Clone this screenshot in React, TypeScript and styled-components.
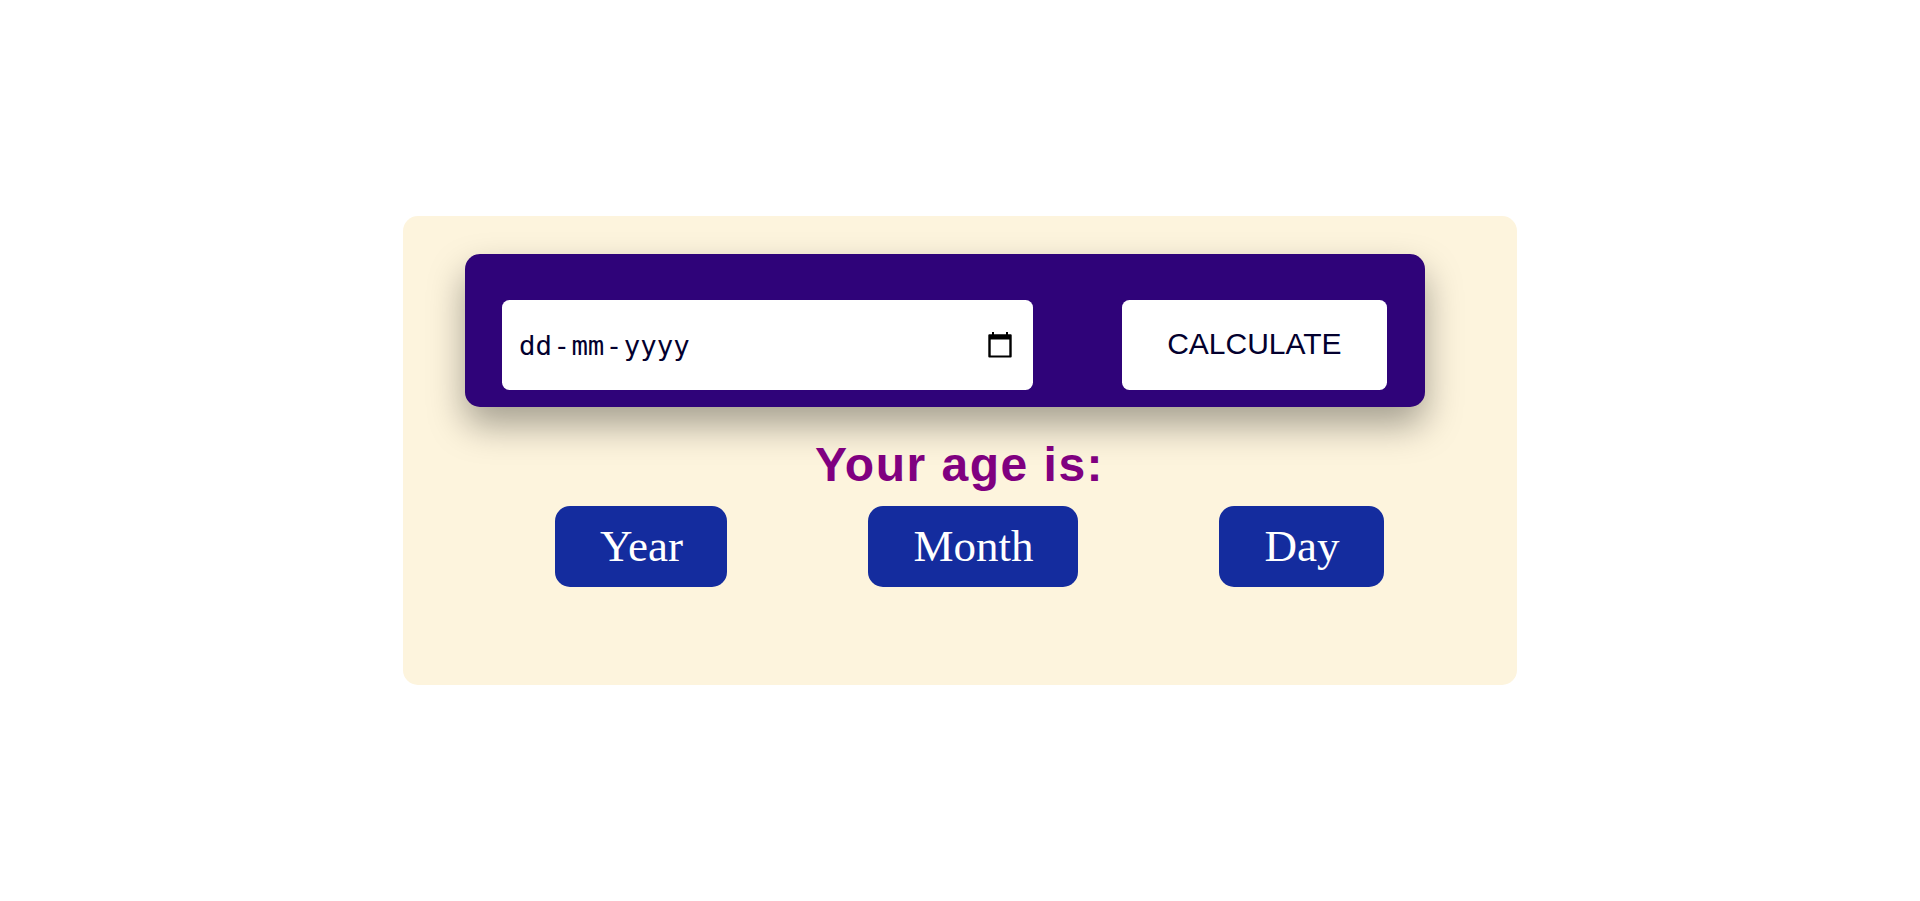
import React from "react";
import styled, { createGlobalStyle } from "styled-components";

const GlobalStyle = createGlobalStyle`
  *, *::before, *::after { box-sizing: border-box; }
  body { margin: 0; background: #ffffff; }
`;

const Page = styled.main`
  min-height: 100vh;
  display: flex;
  align-items: center;
  justify-content: center;
`;

const Card = styled.section`
  width: 1114px;
  height: 468.5px;
  padding-top: 38px;
  border-radius: 15px;
  background: #fdf4dd;
`;

const Panel = styled.form`
  display: flex;
  justify-content: space-between;
  width: 960px;
  height: 153px;
  margin: 0 0 0 62.4px;
  padding: 46px 38px 17px 37px;
  border-radius: 15px;
  background: #2f0379;
  box-shadow: 0 18px 36px rgba(0, 0, 0, 0.35);
`;

const DateField = styled.div`
  display: flex;
  align-items: center;
  justify-content: space-between;
  width: 531px;
  height: 90px;
  padding: 0 21px 0 16.5px;
  border-radius: 7.5px;
  background: #ffffff;
  color: #03002e;
  font: 27.4px/34px "DejaVu Sans Mono", monospace;
`;

const DateText = styled.span`
  display: flex;
  padding-top: 2px;
`;

const Separator = styled.span`
  padding: 0 1.5px;
`;

const CalculateButton = styled.button`
  width: 265px;
  height: 90px;
  padding: 0 1px 2px 0;
  border: 0;
  border-radius: 7.5px;
  background: #ffffff;
  color: #03002e;
  font: 30px/34px "Liberation Sans", Arial, sans-serif;
`;

const Heading = styled.h1`
  margin: 30px 0 0;
  padding-right: 1px;
  color: #800080;
  font: bold 48px/55px "Liberation Sans", Arial, sans-serif;
  letter-spacing: 1.5px;
  text-align: center;
`;

const Results = styled.div`
  display: flex;
  justify-content: space-between;
  margin: 14px 132.7px 0 152.3px;
`;

const Result = styled.div<{ $width: number }>`
  width: ${({ $width }) => $width}px;
  height: 80.3px;
  padding: 14px 0 14px 0.5px;
  text-align: center;
  border-radius: 15px;
  background: #142c9e;
  color: #ffffff;
  font: 45px/52px "Liberation Serif", "Times New Roman", serif;
`;

const CalendarIcon = () => (
  <svg width="24" height="26" viewBox="0 0 24 26" aria-hidden="true">
    <path
      fillRule="evenodd"
      d="M4 0h2v2.3h12V0h2v2.3h2.700a1 1 0 0 1 1 1v21.300a1 1 0 0 1-1 1H1.300a1 1 0 0 1-1-1V3.300a1 1 0 0 1 1-1H4zM2.700 7.600v15.900h18.600V7.600z"
    />
  </svg>
);

const units = [
  { label: "Year", width: 172 },
  { label: "Month", width: 210 },
  { label: "Day", width: 165 },
];

export default function App() {
  return (
    <>
      <GlobalStyle />
      <Page>
        <Card>
          <Panel>
            <DateField>
              <DateText>
                dd<Separator>-</Separator>mm<Separator>-</Separator>yyyy
              </DateText>
              <CalendarIcon />
            </DateField>
            <CalculateButton type="button">CALCULATE</CalculateButton>
          </Panel>
          <Heading>Your age is:</Heading>
          <Results>
            {units.map(({ label, width }) => (
              <Result key={label} $width={width}>{label}</Result>
            ))}
          </Results>
        </Card>
      </Page>
    </>
  );
}
